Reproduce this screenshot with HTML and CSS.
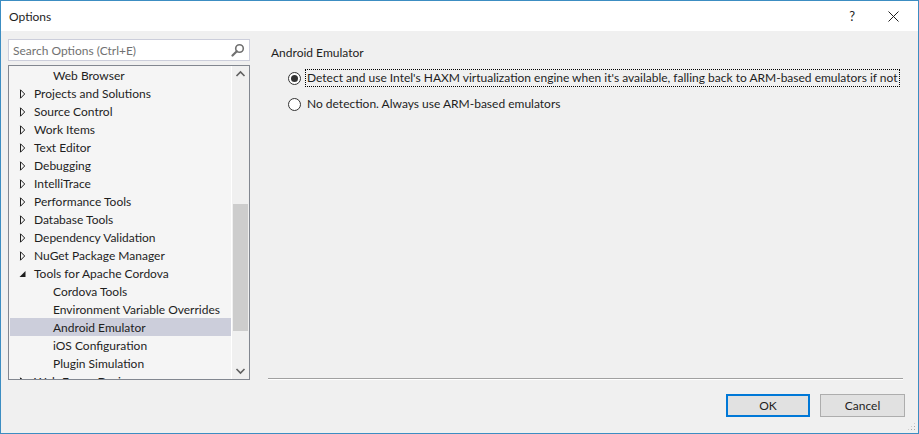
FILE: index.html
```html
<!DOCTYPE html>
<html lang="en">
<head>
    <meta charset="utf-8">
    <title>Options</title>
    <link rel="stylesheet" href="styles.css">
</head>
<body>
    <div class="window">
        <div class="titlebar">
            <span class="title">Options</span>
            <span class="help">?</span>
            <svg class="close" width="11" height="11" viewBox="0 0 11 11">
                <path d="M0.5 0.5 L10.5 10.5 M10.5 0.5 L0.5 10.5" stroke="#1e1e1e" stroke-width="1"/>
            </svg>
        </div>

        <div class="main">
            <div class="side">
                <div class="search">
                    <span class="placeholder">Search Options (Ctrl+E)</span>
                    <svg class="search-icon" width="14" height="14" viewBox="0 0 14 14">
                        <circle cx="8.5" cy="5.5" r="3.8" fill="none" stroke="#707070" stroke-width="1.6"/>
                        <path d="M5.8 8.2 L1.5 12.5" stroke="#707070" stroke-width="2.2" stroke-linecap="round"/>
                    </svg>
                </div>

                <div class="tree">
                    <div class="tree-list">
                        <div class="row child">Web Browser</div>
                        <div class="row"><svg class="arrow" width="7" height="10" viewBox="0 0 7 10"><path d="M1.5 0.8 L1.5 9.2 L5.7 5 Z" fill="none" stroke="#1e1e1e"/></svg>Projects and Solutions</div>
                        <div class="row"><svg class="arrow" width="7" height="10" viewBox="0 0 7 10"><path d="M1.5 0.8 L1.5 9.2 L5.7 5 Z" fill="none" stroke="#1e1e1e"/></svg>Source Control</div>
                        <div class="row"><svg class="arrow" width="7" height="10" viewBox="0 0 7 10"><path d="M1.5 0.8 L1.5 9.2 L5.7 5 Z" fill="none" stroke="#1e1e1e"/></svg>Work Items</div>
                        <div class="row"><svg class="arrow" width="7" height="10" viewBox="0 0 7 10"><path d="M1.5 0.8 L1.5 9.2 L5.7 5 Z" fill="none" stroke="#1e1e1e"/></svg>Text Editor</div>
                        <div class="row"><svg class="arrow" width="7" height="10" viewBox="0 0 7 10"><path d="M1.5 0.8 L1.5 9.2 L5.7 5 Z" fill="none" stroke="#1e1e1e"/></svg>Debugging</div>
                        <div class="row"><svg class="arrow" width="7" height="10" viewBox="0 0 7 10"><path d="M1.5 0.8 L1.5 9.2 L5.7 5 Z" fill="none" stroke="#1e1e1e"/></svg>IntelliTrace</div>
                        <div class="row"><svg class="arrow" width="7" height="10" viewBox="0 0 7 10"><path d="M1.5 0.8 L1.5 9.2 L5.7 5 Z" fill="none" stroke="#1e1e1e"/></svg>Performance Tools</div>
                        <div class="row"><svg class="arrow" width="7" height="10" viewBox="0 0 7 10"><path d="M1.5 0.8 L1.5 9.2 L5.7 5 Z" fill="none" stroke="#1e1e1e"/></svg>Database Tools</div>
                        <div class="row"><svg class="arrow" width="7" height="10" viewBox="0 0 7 10"><path d="M1.5 0.8 L1.5 9.2 L5.7 5 Z" fill="none" stroke="#1e1e1e"/></svg>Dependency Validation</div>
                        <div class="row"><svg class="arrow" width="7" height="10" viewBox="0 0 7 10"><path d="M1.5 0.8 L1.5 9.2 L5.7 5 Z" fill="none" stroke="#1e1e1e"/></svg>NuGet Package Manager</div>
                        <div class="row"><svg class="arrow" width="7" height="10" viewBox="0 0 7 10"><path d="M6.5 2 L6.5 8 L0.5 8 Z" fill="#1e1e1e"/></svg>Tools for Apache Cordova</div>
                        <div class="row child">Cordova Tools</div>
                        <div class="row child">Environment Variable Overrides</div>
                        <div class="row child selected">Android Emulator</div>
                        <div class="row child">iOS Configuration</div>
                        <div class="row child">Plugin Simulation</div>
                        <div class="row"><svg class="arrow" width="7" height="10" viewBox="0 0 7 10"><path d="M1.5 0.8 L1.5 9.2 L5.7 5 Z" fill="none" stroke="#1e1e1e"/></svg>Web Forms Designer</div>
                    </div>
                    <div class="scrollbar">
                        <svg width="17" height="17" viewBox="0 0 17 17">
                            <path d="M4.5 10 L8.5 6 L12.5 10" fill="none" stroke="#606060" stroke-width="1.6"/>
                        </svg>
                        <div class="track"><div class="thumb"></div></div>
                        <svg width="17" height="17" viewBox="0 0 17 17">
                            <path d="M4.5 7 L8.5 11 L12.5 7" fill="none" stroke="#606060" stroke-width="1.6"/>
                        </svg>
                    </div>
                </div>
            </div>

            <div class="panel">
                <div class="panel-title">Android Emulator</div>
                <label class="option first">
                    <span class="radio checked"></span>
                    <span class="option-text focused">Detect and use Intel's HAXM virtualization engine when it's available, falling back to ARM-based emulators if not</span>
                </label>
                <label class="option">
                    <span class="radio"></span>
                    <span class="option-text">No detection. Always use ARM-based emulators</span>
                </label>
            </div>
        </div>

        <div class="footer">
            <button class="btn default">OK</button>
            <button class="btn">Cancel</button>
            <div class="grip"></div>
        </div>
    </div>
</body>
</html>
```

FILE: styles.css
```css
* {
    margin: 0;
    padding: 0;
    box-sizing: border-box;
}

:root {
    --text-color: #1e1e1e;
    --bg-color: #f0f0f0;
    --frame: #3c8dc2;
}

body {
    width: 919px;
    height: 434px;
    overflow: hidden;
    font-family: "Segoe UI", Lato, "Liberation Sans", sans-serif;
    font-size: 12px;
    color: var(--text-color);
    background-color: var(--bg-color);
}

.window {
    width: 919px;
    height: 434px;
    border: 1px solid var(--frame);
    background-color: var(--bg-color);
    display: flex;
    flex-direction: column;
}

.titlebar {
    height: 30px;
    flex-shrink: 0;
    background-color: #fff;
    display: flex;
    align-items: center;
    padding-left: 8px;
}

.title {
    flex: 1;
    font-size: 12px;
}

.help {
    font-size: 13px;
    margin-right: 33px;
}

.close {
    margin-right: 19px;
}

.main {
    height: 349px;
    display: flex;
    padding: 8px 0 0 7px;
}

.side {
    width: 242px;
    display: flex;
    flex-direction: column;
    gap: 4px;
}

.search {
    height: 22px;
    background-color: #fff;
    border: 1px solid #cccedb;
    display: flex;
    align-items: center;
    padding: 0 4px 0 4px;
}

.placeholder {
    flex: 1;
    color: #717171;
}

.tree {
    height: 315px;
    border: 1px solid #828790;
    background-color: #f5f5f5;
    display: flex;
    overflow: hidden;
}

.tree-list {
    flex: 1;
    padding-left: 1px;
    overflow: hidden;
}

.row {
    height: 18px;
    line-height: 18px;
    padding: 1px 0 0 24px;
    white-space: nowrap;
    display: flex;
    align-items: center;
}

.row.child {
    padding-left: 43px;
}

.row.selected {
    background-color: #cccedb;
}

.arrow {
    flex-shrink: 0;
    margin-left: -15px;
    margin-right: 8px;
    display: block;
}

.scrollbar {
    width: 18px;
    border-left: 1px solid #fff;
    background-color: var(--bg-color);
    display: flex;
    flex-direction: column;
}

.scrollbar svg {
    flex-shrink: 0;
    display: block;
}

.track {
    flex: 1;
    padding: 121px 1px 0 1px;
}

.thumb {
    height: 127px;
    background-color: #cdcdcd;
}

.panel {
    flex: 1;
    margin: 0 15px 1px 18px;
    display: flex;
    flex-direction: column;
    border-bottom: 1px solid #a0a0a0;
    box-shadow: 0 1px 0 #fff;
}

.panel-title {
    padding: 5px 0 0 3px;
    height: 23px;
    line-height: 18px;
}

.option {
    display: flex;
    align-items: center;
    height: 26px;
    padding-left: 20px;
    gap: 4px;
}

.option.first {
    margin-top: 3px;
}

.radio {
    width: 13px;
    height: 13px;
    border: 1px solid #333;
    border-radius: 50%;
    background-color: #fff;
    display: flex;
    align-items: center;
    justify-content: center;
    flex-shrink: 0;
}

.radio.checked::after {
    content: "";
    width: 7px;
    height: 7px;
    border-radius: 50%;
    background-color: #333;
}

.option-text {
    white-space: nowrap;
    padding: 0 1px;
    line-height: 16px;
    border: 1px solid transparent;
}

.option-text.focused {
    border: 1px dotted #000;
}

.footer {
    flex: 1;
    display: flex;
    justify-content: flex-end;
    align-items: flex-start;
    padding: 14px 13px 0 0;
    gap: 10px;
    position: relative;
}

.btn {
    height: 23px;
    width: 85px;
    font-family: inherit;
    font-size: 12px;
    color: var(--text-color);
    background-color: #e1e1e1;
    border: 1px solid #adadad;
}

.btn.default {
    width: 84px;
    border: 2px solid #0078d7;
}

.grip {
    position: absolute;
    right: 2px;
    bottom: 2px;
    width: 9px;
    height: 9px;
    background:
        radial-gradient(circle, #a8a8a8 0 0.9px, transparent 1px) 0 0 / 3px 3px;
    clip-path: polygon(100% 0, 100% 100%, 0 100%);
}
```
